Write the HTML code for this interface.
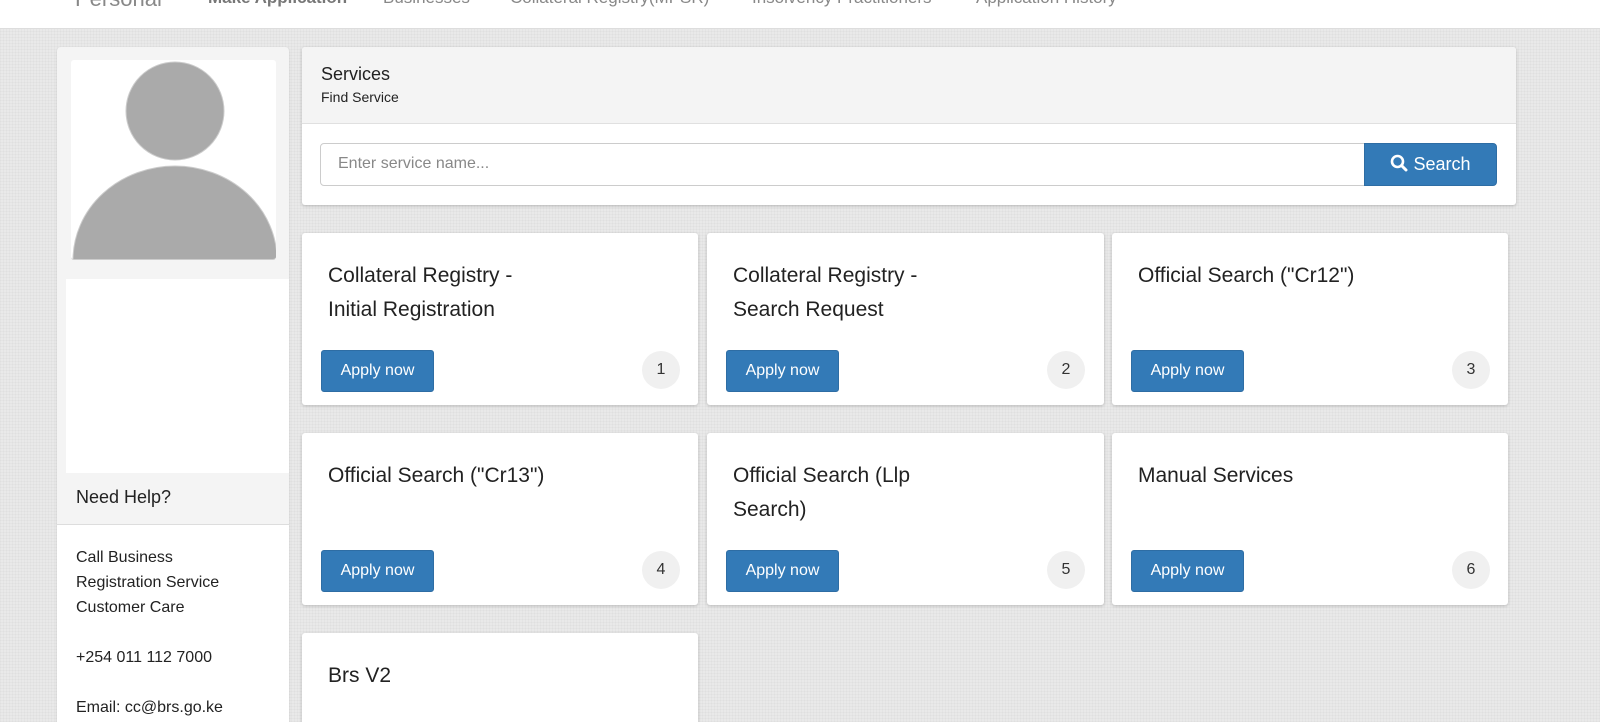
<!DOCTYPE html>
<html style="width:1600px;height:722px;overflow:hidden"><head><meta charset="utf-8"><style>
*{box-sizing:border-box;margin:0;padding:0}
body{width:1600px;height:722px;overflow:hidden;font-family:"Liberation Sans",Arial,sans-serif;color:#222;
background-color:#e9e9e9;background-image:repeating-linear-gradient(0deg,rgba(0,0,0,.025) 0 1px,transparent 1px 3px),repeating-linear-gradient(90deg,rgba(0,0,0,.025) 0 1px,transparent 1px 3px);position:relative}
.abs{position:absolute}
.hdr{left:0;top:0;width:1600px;height:29px;background:#fff;border-bottom:1px solid #ddd;overflow:hidden}
.hdr span{position:absolute;top:-12px;font-size:17px;color:#888;white-space:nowrap}
.side{left:57px;top:47px;width:232px;height:675px;background:#f4f4f4;border-radius:4px 4px 0 0;box-shadow:0 1px 2px rgba(0,0,0,.15)}
.card{background:#fff;border-radius:3px;box-shadow:0 1px 3px rgba(0,0,0,.2);overflow:hidden}
.title{position:absolute;left:26px;top:26px;font-size:21px;line-height:34px;color:#222;width:300px}
.btn{position:absolute;left:19px;top:117px;width:113px;height:42px;background:#337ab7;border:1px solid #2e6da4;border-radius:3px;color:#fff;font-size:16px;line-height:40px;text-align:center}
.num{position:absolute;left:340px;top:118px;width:38px;height:38px;border-radius:50%;background:#f0f0f0;font-size:16px;line-height:38px;text-align:center;color:#333}
</style></head><body>
<div class="abs hdr">
<span style="left:75px;font-size:22px;top:-14px">Personal</span>
<span style="left:208px;font-weight:bold;color:#777">Make Application</span>
<span style="left:383px">Businesses</span>
<span style="left:510px">Collateral Registry(MPSR)</span>
<span style="left:752px">Insolvency Practitioners</span>
<span style="left:976px">Application History</span>
</div>

<div class="abs side"></div>
<div class="abs" style="left:71px;top:60px;width:205px;height:200px;background:#fff;border-radius:3px;overflow:hidden;border-bottom:1px solid #ccc">
<svg width="205" height="199" style="display:block"><circle cx="104" cy="51" r="49" fill="#aaa" stroke="#ccc"/><ellipse cx="104" cy="200" rx="102" ry="94" fill="#aaa" stroke="#ccc"/></svg>
</div>
<div class="abs" style="left:66px;top:279px;width:223px;height:194px;background:#fff"></div>
<div class="abs" style="left:57px;top:473px;width:232px;height:52px;background:#f4f4f4;border-bottom:1px solid #ddd;font-size:18px;padding:14px 0 0 19px">Need Help?</div>
<div class="abs" style="left:57px;top:525px;width:232px;height:197px;overflow:hidden;background:#fff;font-size:16px;line-height:25px;padding:20px 0 0 19px">Call Business<br>Registration Service<br>Customer Care<br><br>+254 011 112 7000<br><br>Email: cc@brs.go.ke</div>

<div class="abs card" style="left:302px;top:47px;width:1214px;height:158px">
<div style="height:77px;background:#f4f4f4;border-bottom:1px solid #e0e0e0;padding:17px 0 0 19px"><div style="font-size:18px">Services</div><div style="font-size:14px;margin-top:4px">Find Service</div></div>
<div class="abs" style="left:18px;top:96px;width:1045px;height:43px;border:1px solid #ccc;border-radius:4px 0 0 4px;font-size:16px;color:#888;padding:11px 0 0 17px">Enter service name...</div>
<div class="abs" style="left:1062px;top:96px;width:133px;height:43px;background:#337ab7;border:1px solid #2e6da4;border-radius:0 4px 4px 0;color:#fff;font-size:18px;line-height:40px;text-align:center">
<svg width="18" height="18" viewBox="0 0 18 18" style="vertical-align:-2px"><circle cx="7.5" cy="7.5" r="5.5" fill="none" stroke="#fff" stroke-width="2.6"/><path d="M11.5 11.5L16 16" stroke="#fff" stroke-width="3" stroke-linecap="round"/></svg> Search</div>
</div>

<div class="abs card" style="left:302px;top:233px;width:396px;height:172px"><div class="title">Collateral Registry -<br>Initial Registration</div><div class="btn">Apply now</div><div class="num">1</div></div>
<div class="abs card" style="left:707px;top:233px;width:397px;height:172px"><div class="title">Collateral Registry -<br>Search Request</div><div class="btn">Apply now</div><div class="num">2</div></div>
<div class="abs card" style="left:1112px;top:233px;width:396px;height:172px"><div class="title">Official Search ("Cr12")</div><div class="btn">Apply now</div><div class="num">3</div></div>
<div class="abs card" style="left:302px;top:433px;width:396px;height:172px"><div class="title">Official Search ("Cr13")</div><div class="btn">Apply now</div><div class="num">4</div></div>
<div class="abs card" style="left:707px;top:433px;width:397px;height:172px"><div class="title">Official Search (Llp<br>Search)</div><div class="btn">Apply now</div><div class="num">5</div></div>
<div class="abs card" style="left:1112px;top:433px;width:396px;height:172px"><div class="title">Manual Services</div><div class="btn">Apply now</div><div class="num">6</div></div>
<div class="abs card" style="left:302px;top:633px;width:396px;height:89px;border-radius:3px 3px 0 0"><div class="title">Brs V2</div></div>
</body></html>
